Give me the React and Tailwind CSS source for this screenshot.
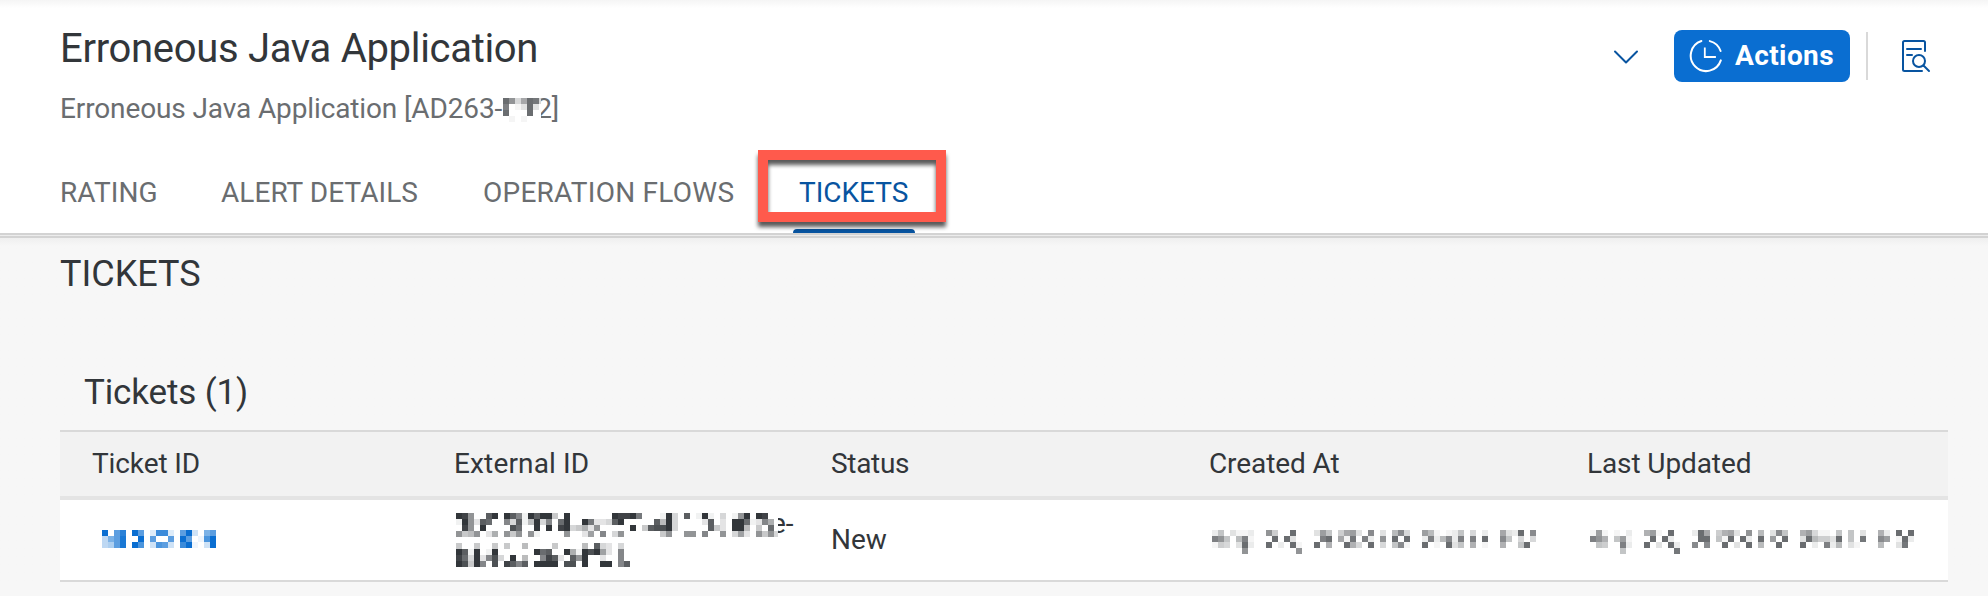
import React from "react";

const CELL = 6;

// Each character is one 6px cell; hex digit = ink strength, "." = empty.
function Mosaic({ rows, color, className, width }) {
  const fullWidth = Math.max(...rows.map((r) => r.length)) * CELL;
  return (
    <svg
      className={className}
      width={width ?? fullWidth}
      height={rows.length * CELL}
      shapeRendering="crispEdges"
      fill={color}
      aria-hidden="true"
    >
      {rows.flatMap((row, y) =>
        [...row].map((c, x) =>
          c === "." ? null : (
            <rect
              key={`${x}-${y}`}
              x={x * CELL}
              y={y * CELL}
              width={CELL}
              height={CELL}
              fillOpacity={parseInt(c, 16) / 15}
            />
          )
        )
      )}
    </svg>
  );
}

const NAME_SUFFIX = ["FB49FE4", "D.13F3.", "F...F..", ".1.1..."];

const TICKET_ID = [
  "F.AD.FA.2CC2.AF3.8A",
  "48AE..F.A..A.FA.1BF",
  "45AE.FB.3BA3.CF1.3F",
];

const EXTERNAL_1 = [
  "FE8..CF.FC91FCFF4.F.......FEEFA...1F3.C.1F1.3.18F.FE..",
  "1F82CB..93C15F39.BF..FA223CF.....C5F3....2C.2.FFB1296.",
  ".E8.F....DB..F.F.EF34628.....F.4CDDF3.....C42.FF5.4.B.",
  "8458.26.848.81....8..27.9.38......48..88.9..8.372.8483",
];

const EXTERNAL_2 = [
  "4..4..4.4..5....4....5.C32.3.",
  "FC1F.1F......FBC..F61FDF72.9.",
  "EB3F29D3.F.5..9EC2.C8F..2..9.",
  "FD4F9.D.EC9C.FFFF.DD.F..FF.9C",
];

const CREATED = [
  "26.3112..B5..F...3A6.59A3.C.3.7C4..A71.126.4.2..932F.C",
  "DB6.7D1...F.F3....DF.91E.D2.B.F.F..2D27C2D.D.F..C6.4.4",
  "154.3F2..F.2.F1..F.8..F84.F.4.6C1..F.1.F36.8.1..8..6F.",
  ".....B........B.......................................",
];

const UPDATED = [
  "1A1.1.2..8A1.F...2F9.5893.B.7.3C6..8A411.6.6.3..82.F.F",
  "DB8.6A1...F.F2....FF.61F.F2.F.A.F..3F7553F.6.E..CA.1F2",
  ".65..D2..F.3.F2..C.C..F.3.F.7..F...F.2.D27.31...7..3E.",
  ".....6........E.......................................",
];

function ActivityIcon() {
  return (
    <svg width="34" height="34" viewBox="0 0 34 34" fill="none" stroke="white" strokeWidth="2" strokeLinecap="round">
      <path d="M20.8 2.1A15.4 15.4 0 0 1 31.6 12" />
      <path d="M31.8 21.4A15.4 15.4 0 1 1 12.4 2" />
      <path d="M15.8 9.5V18H26" strokeLinecap="square" strokeWidth="1.8" />
    </svg>
  );
}

function DocumentSearchIcon() {
  return (
    <svg width="30" height="34" viewBox="0 0 30 34" fill="none" stroke="#0854a0" strokeWidth="2" strokeLinecap="round">
      <path d="M21 32H3.5Q2 32 2 30.5V3.500Q2 2 3.500 2H22.500Q24 2 24 3.500V12" />
      <path d="M6 10H20M6 16H11" />
      <circle cx="18" cy="22" r="6" />
      <path d="M22.500 26.500L28 32" />
    </svg>
  );
}

function Tab({ children, className }) {
  return <div className={`shrink-0 leading-9 text-[#6a6d70] ${className}`}>{children}</div>;
}

export default function App() {
  return (
    <div className="flex h-[596px] w-[1988px] flex-col overflow-hidden bg-[#f7f7f7] font-['Roboto',sans-serif] text-[28px] text-[#32363a]">
      <header className="flex h-[233px] shrink-0 flex-col bg-white bg-linear-to-b from-[#f5f5f5] to-white to-[8px] px-[60px]">
        <div className="flex justify-between pt-[25px]">
          <div>
            <h1 className="text-[40px] leading-[48px] tracking-[-0.31px] whitespace-nowrap">
              <span>Erroneous Java Application</span>
            </h1>
            <div className="mt-[18px] flex leading-9 whitespace-nowrap text-[#6a6d70]">
              <span className="tracking-[-0.12px]">Erroneous Java Application [AD263-</span>
              <Mosaic rows={NAME_SUFFIX} width={38} color="#6a6d70" className="relative mt-[7px] -mr-[5px] ml-px shrink-0 bg-white" />
              <span className="tracking-[-0.3px]">2]</span>
            </div>
          </div>
          <div className="-mr-[3px] flex h-[52px] items-center pt-[10px]">
            <svg className="mt-[2px] mr-[34px]" width="28" height="16" viewBox="0 0 28 16" fill="none" stroke="#0854a0" strokeWidth="2" strokeLinecap="round" strokeLinejoin="round">
              <path d="M3 2.500L14 13.500L25 2.500" />
            </svg>
            <button className="flex h-[52px] w-44 shrink-0 items-center rounded-lg bg-[#0a6ed1] pl-[15px] font-bold text-white">
              <ActivityIcon />
              <span className="ml-3 tracking-[0.4px]">Actions</span>
            </button>
            <div className="ml-4 h-12 w-[2px] bg-[#d9d9d9]" />
            <div className="ml-[33px]">
              <DocumentSearchIcon />
            </div>
          </div>
        </div>
        <nav className="mt-12 flex h-[58px] whitespace-nowrap">
          <Tab className="w-[161px] tracking-[0.1px]">RATING</Tab>
          <Tab className="w-[262px] tracking-[0.05px]">ALERT DETAILS</Tab>
          <Tab className="w-[310px] tracking-[0.25px]">OPERATION FLOWS</Tab>
          <div className="relative flex w-[122px] flex-col justify-between">
            <span className="pl-[6px] leading-9 text-[#0854a0]">TICKETS</span>
            <span className="h-1 rounded-t bg-[#0854a0]" />
            <div className="absolute -top-[25px] -left-[35px] h-[72px] w-[188px] border-[10px] border-[#ff5a4c] drop-shadow-[0_5px_2px_rgba(0,0,0,0.65)]" />
          </div>
        </nav>
      </header>
      <div className="h-[5px] shrink-0 border-y-2 border-[#d3d3d3] bg-[#ececec]" />
      <main className="flex flex-col bg-linear-to-b from-[#efefef] to-[#f7f7f7] to-[8px] px-[60px]">
        <h2 className="pt-[14px] text-[36px] leading-[44px]"><span>TICKETS</span></h2>
        <h3 className="mt-[75px] pl-6 text-[35px] leading-[44px] tracking-[-0.15px]"><span>Tickets (1)</span></h3>
        <div className="mt-[15px] w-[1888px] border-y-2 border-[#d9d9d9]">
          <div className="grid h-[68px] grid-cols-[362px_377px_378px_378px_1fr] items-center border-b-4 border-[#e4e4e4] bg-[#f2f2f2] pl-8 tracking-[-0.1px]">
            <span>Ticket ID</span>
            <span className="tracking-[0.15px]">External ID</span>
            <span className="tracking-[-0.3px]">Status</span>
            <span>Created At</span>
            <span>Last Updated</span>
          </div>
          <div className="grid h-20 grid-cols-[362px_377px_378px_378px_1fr] items-center bg-white pl-8">
            <Mosaic rows={TICKET_ID} color="#0a6ed1" className="mt-[-2px] ml-[10px]" />
            <div className="flex flex-col gap-[6px] pl-[2px]">
              <div className="flex h-6">
                <Mosaic rows={EXTERNAL_1} width={322} color="#32363a" className="relative -mr-[7px] shrink-0 bg-white" />
                <span className="-mt-[5px] leading-8">e-</span>
              </div>
              <Mosaic rows={EXTERNAL_2} color="#32363a" />
            </div>
            <span>New</span>
            <Mosaic rows={CREATED} color="#6a6d70" className="mt-1 ml-[3px]" />
            <Mosaic rows={UPDATED} color="#6a6d70" className="mt-1 ml-[3px]" />
          </div>
        </div>
      </main>
    </div>
  );
}
